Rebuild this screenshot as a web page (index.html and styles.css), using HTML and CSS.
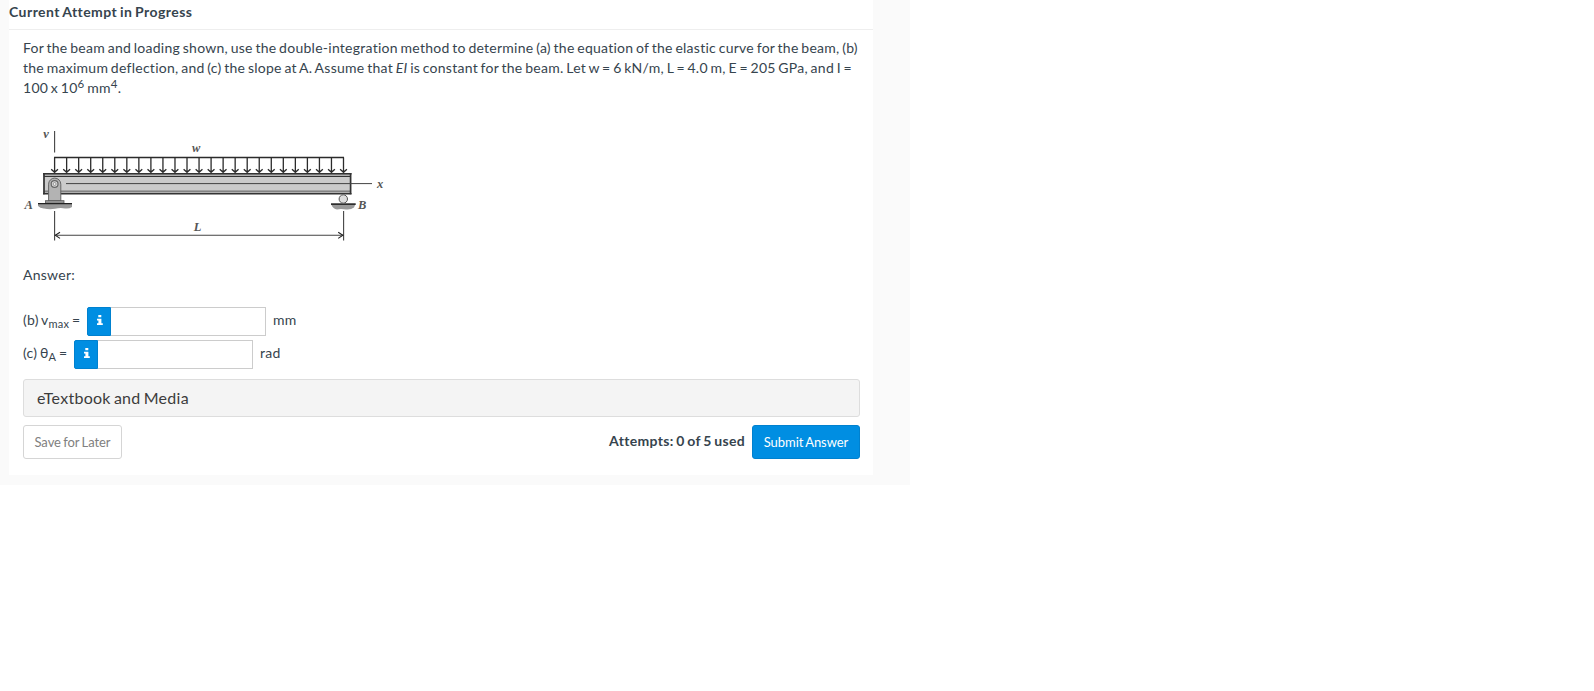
FILE: index.html
```html
<!DOCTYPE html>
<html lang="en">
<head>
  <meta charset="UTF-8">
  <title>Current Attempt in Progress</title>
  <link rel="stylesheet" href="styles.css">
</head>
<body>
  <div class="assessment">
    <main class="card">
      <h1>Current Attempt in Progress</h1>

      <div class="question">
        <p class="prompt">For the beam and loading shown, use the double-integration method to determine (a) the equation of the elastic curve for the beam, (b)<br>
        the maximum deflection, and (c) the slope at A. Assume that <em>EI</em> is constant for the beam. Let w = 6 kN/m, L = 4.0 m, E = 205 GPa, and I =<br>
        100 x 10<sup>6</sup> mm<sup>4</sup>.</p>

        <svg class="figure" width="370" height="116" viewBox="22 128 370 116">
          <defs>
            <path id="load" d="M0 157.5V172M-3.4 169.2L0 172.3L3.4 169.2"/>
          </defs>

          <!-- beam -->
          <rect x="43.5" y="173.5" width="307.5" height="20.2" fill="#cbcbcb"/>
          <rect x="43.5" y="173.5" width="307.5" height="3" fill="#b0b0b0"/>
          <rect x="43.5" y="191" width="307.5" height="2.7" fill="#b0b0b0"/>
          <g fill="none" stroke="#333">
            <path d="M43 173.7H351.5" stroke-width="1.6"/>
            <path d="M44 176.5H351" stroke-width="1.2"/>
            <path d="M44 191.1H351" stroke="#666"/>
            <path d="M43 193.7H351.5" stroke-width="1.4"/>
            <path d="M44 173V194.2M350.6 173V194.2" stroke-width="1.7"/>
            <path d="M66 183.6H372" stroke="#444"/>
          </g>

          <!-- distributed load -->
          <g fill="none" stroke="#2b2b2b" stroke-width="1.3">
            <path d="M54 157.5H344"/>
            <use href="#load" x="54.6"/>
            <use href="#load" x="66.64"/>
            <use href="#load" x="78.68"/>
            <use href="#load" x="90.71"/>
            <use href="#load" x="102.75"/>
            <use href="#load" x="114.79"/>
            <use href="#load" x="126.83"/>
            <use href="#load" x="138.86"/>
            <use href="#load" x="150.9"/>
            <use href="#load" x="162.94"/>
            <use href="#load" x="174.98"/>
            <use href="#load" x="187.01"/>
            <use href="#load" x="199.05"/>
            <use href="#load" x="211.09"/>
            <use href="#load" x="223.13"/>
            <use href="#load" x="235.16"/>
            <use href="#load" x="247.2"/>
            <use href="#load" x="259.24"/>
            <use href="#load" x="271.28"/>
            <use href="#load" x="283.31"/>
            <use href="#load" x="295.35"/>
            <use href="#load" x="307.39"/>
            <use href="#load" x="319.43"/>
            <use href="#load" x="331.46"/>
            <use href="#load" x="343.5"/>
          </g>

          <!-- pin support A -->
          <path d="M38 203.5H72V207Q69 209 65 208.4Q60 207.5 55 208.8Q49 209.8 44 208.4Q40 208.5 38 206Z" fill="#999"/>
          <path d="M48.6 201V184.2A6 6 0 0 1 60.8 184.2V201Z" fill="#b3b3b3" stroke="#666"/>
          <rect x="45.5" y="200.7" width="18.5" height="2.5" fill="#999" stroke="#555" stroke-width="0.8"/>
          <circle cx="54.6" cy="184" r="3.4" fill="#ddd" stroke="#666" stroke-width="1.2"/>
          <circle cx="54.6" cy="184" r="1.5" fill="#eee" stroke="#777" stroke-width="0.7"/>
          <path d="M38 203.6H72" stroke="#222" stroke-width="1.4"/>

          <!-- roller support B -->
          <path d="M331.5 204H355.5L354 207.5Q351 210 346 209.5Q341 208.6 337 209.4Q333 209 331.5 205Z" fill="#999"/>
          <path d="M331 204.1H355.7" stroke="#222" stroke-width="1.6"/>
          <circle cx="343.3" cy="199" r="4.2" fill="#ddd" stroke="#555"/>

          <!-- axes and span dimension -->
          <g fill="none" stroke="#444" stroke-width="1.1">
            <path d="M54.6 131V152.5M54.6 211V240.5M343.6 211V240.5M55 235.3H343"/>
            <path d="M60 232.2L55.3 235.3L60 238.4M338.2 232.2L342.9 235.3L338.2 238.4" stroke="#222"/>
          </g>

          <g class="figure-labels">
            <text x="43.3" y="137.8">v</text>
            <text x="192" y="152">w</text>
            <text x="377" y="187.5">x</text>
            <text x="24.5" y="209">A</text>
            <text x="358" y="209">B</text>
            <text x="193.8" y="231">L</text>
          </g>
        </svg>

        <p class="answer-heading">Answer:</p>

        <div class="answer-row">
          <label class="answer-label" for="vmax">(b) v<sub>max</sub> =</label>
          <div class="answer-input">
            <span class="info"><svg width="6" height="10" viewBox="0 0 6 10"><path d="M1.3 0H4.3V2.3H1.3ZM0 3.7H4.4V8.2H5.8V10H0V8.2H1.4V5.4H0Z" fill="#fff"/></svg></span>
            <input type="text" id="vmax">
          </div>
          <span class="unit">mm</span>
        </div>
        <div class="answer-row">
          <label class="answer-label label-short" for="theta">(c) θ<sub>A</sub> =</label>
          <div class="answer-input">
            <span class="info"><svg width="6" height="10" viewBox="0 0 6 10"><path d="M1.3 0H4.3V2.3H1.3ZM0 3.7H4.4V8.2H5.8V10H0V8.2H1.4V5.4H0Z" fill="#fff"/></svg></span>
            <input type="text" id="theta">
          </div>
          <span class="unit">rad</span>
        </div>

        <div class="resources">eTextbook and Media</div>

        <div class="actions">
          <button type="button" class="btn">Save for Later</button>
          <span class="attempts">Attempts: 0 of 5 used</span>
          <button type="button" class="btn btn-primary">Submit Answer</button>
        </div>
      </div>
    </main>
  </div>
</body>
</html>
```
FILE: styles.css
```css
* {
  box-sizing: border-box;
}

body {
  margin: 0;
  background-color: #fff;
  color: #36444e;
  font-family: Lato, sans-serif;
  font-size: 14px;
  line-height: 20px;
  letter-spacing: 0.26px;
  word-spacing: -1.15px;
}

.assessment {
  width: 910px;
  height: 485px;
  padding: 0 37px 10px 9px;
  background-color: #fafafa;
}

.card {
  height: 475px;
  background-color: #fff;
}

h1 {
  height: 30px;
  margin: 0;
  padding-top: 2px;
  border-bottom: 1px solid #eee;
  font-size: 14px;
  font-weight: 700;
  line-height: 20px;
  letter-spacing: 0.45px;
}

.question {
  padding: 8px 13px 0 14px;
}

.prompt {
  height: 60px;
  margin: 0;
  white-space: nowrap;
}

sup,
sub {
  position: relative;
  font-size: 11.5px;
  line-height: 0;
  vertical-align: baseline;
}

sup {
  top: -5px;
}

sub {
  top: 3px;
  font-size: 11px;
}

.figure {
  display: block;
  margin: 30px 0 0 -1px;
  overflow: visible;
}

.figure-labels {
  font-family: "Liberation Serif", serif;
  font-size: 12.5px;
  font-style: italic;
  font-weight: 700;
  letter-spacing: 0;
  fill: #555;
}

.answer-heading {
  margin: 21px 0 22px;
}

.answer-row {
  display: flex;
  height: 29px;
  margin-bottom: 4px;
}

.answer-label,
.unit {
  padding-top: 3px;
}

.answer-label {
  width: 56px;
  white-space: nowrap;
}

.label-short {
  width: 43px;
}

.answer-input {
  display: flex;
  width: 179px;
  margin: 0 7px 0 8px;
}

.info {
  display: flex;
  align-items: center;
  justify-content: center;
  width: 24px;
  padding: 0 0 3px 1px;
  background-color: #008ee2;
  border: 1px solid #0081cf;
  border-radius: 2px 0 0 2px;
}

.answer-input input {
  flex: 1;
  min-width: 0;
  padding: 0 6px;
  border: 1px solid #ccc;
  border-left: 0;
  font: inherit;
}

.resources {
  height: 38px;
  margin-top: 10px;
  padding: 8px 13px;
  background-color: #f4f4f4;
  border: 1px solid #ddd;
  border-radius: 3px;
  color: #3c3c3c;
  font-size: 16px;
}

.actions {
  display: flex;
  align-items: center;
  margin-top: 8px;
}

.btn {
  width: 99px;
  height: 34px;
  padding: 0;
  background-color: #fff;
  border: 1px solid #d5d5d5;
  border-radius: 3px;
  color: #808080;
  font-family: inherit;
  font-size: 13px;
  letter-spacing: -0.05px;
  word-spacing: -1px;
  white-space: nowrap;
}

.btn-primary {
  width: 108px;
  background-color: #008ee2;
  border-color: #0081cf;
  color: #fff;
}

.attempts {
  margin: 0 7px 2px auto;
  font-weight: 700;
  letter-spacing: 0.33px;
}
```
